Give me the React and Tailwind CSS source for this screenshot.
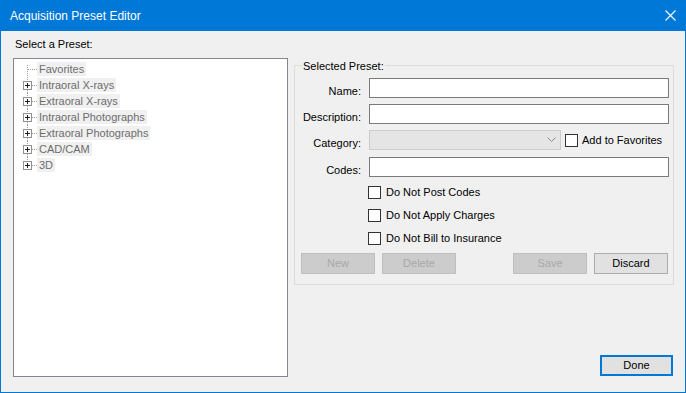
const font = "font-['Liberation_Sans',Arial,sans-serif]"

const treeItems = [
  { label: 'Favorites', folder: false },
  { label: 'Intraoral X-rays', folder: true },
  { label: 'Extraoral X-rays', folder: true },
  { label: 'Intraoral Photographs', folder: true },
  { label: 'Extraoral Photographs', folder: true },
  { label: 'CAD/CAM', folder: true },
  { label: '3D', folder: true },
]

function TreeLines({ first, last, folder }) {
  const dot = { stroke: '#a0a0a0', strokeWidth: 1, strokeDasharray: '1 1' }
  return (
    <svg width="23" height="16" className="shrink-0">
      {folder ? (
        <>
          {!first && <line x1="13.5" y1="0" x2="13.5" y2="3" {...dot} />}
          {!last && <line x1="13.5" y1="13" x2="13.5" y2="16" {...dot} />}
          <line x1="18" y1="8.5" x2="23" y2="8.5" {...dot} />
          <rect x="9.5" y="4.5" width="8" height="8" fill="#fff" stroke="#919191" />
          <line x1="11" y1="8.5" x2="16" y2="8.5" stroke="#1e1e1e" />
          <line x1="13.5" y1="6" x2="13.5" y2="11" stroke="#1e1e1e" />
        </>
      ) : (
        <>
          <line x1="13.5" y1={first ? 4 : 0} x2="13.5" y2={last ? 8 : 16} {...dot} />
          <line x1="14" y1="8.5" x2="23" y2="8.5" {...dot} />
        </>
      )}
    </svg>
  )
}

function Field({ label, children, className = '' }) {
  return (
    <div className={`flex items-end ${className}`}>
      <span className="w-[66px] text-right leading-[13px]">{label}</span>
      <div className="ml-[8px] flex items-center">{children}</div>
    </div>
  )
}

function Check({ label, className = '' }) {
  return (
    <div className={`flex items-center h-[13px] ${className}`}>
      <span className="w-[13px] h-[13px] border border-[#333333] bg-white shrink-0" />
      <span className="ml-[5px] leading-[13px]">{label}</span>
    </div>
  )
}

function Btn({ children, disabled, className = '' }) {
  return (
    <button
      type="button"
      className={`w-[74px] h-[21px] border text-[11px] leading-none flex items-center justify-center ${
        disabled
          ? 'bg-[#cccccc] border-[#bfbfbf] text-[#a8a8a8]'
          : 'bg-[#e1e1e1] border-[#adadad] text-black'
      } ${className}`}
    >
      {children}
    </button>
  )
}

export default function App() {
  return (
    <div className={`w-[686px] h-[393px] flex flex-col bg-[#f0f0f0] border-x border-b border-[#0078d7] text-[11px] text-black ${font}`}>
      <div className="h-[31px] shrink-0 bg-[#0078d7] flex items-center justify-between pl-[9px] pr-[9px] text-white text-[12px]">
        <span>Acquisition Preset Editor</span>
        <svg width="11" height="11" viewBox="0 0 11 11">
          <line x1="0.5" y1="0.5" x2="10.5" y2="10.5" stroke="#fff" strokeWidth="1.1" />
          <line x1="10.5" y1="0.5" x2="0.5" y2="10.5" stroke="#fff" strokeWidth="1.1" />
        </svg>
      </div>

      <div className="flex-1 flex pl-[12px] pb-[15px]">
        <div className="w-[275px] flex flex-col pt-[7px]">
          <span className="ml-[2px] leading-[13px]">Select a Preset:</span>
          <div className="mt-[7px] h-[319px] border border-[#828790] bg-white pt-[2px]">
            {treeItems.map((item, i) => (
              <div key={item.label} className="h-[16px] flex items-center">
                <TreeLines first={i === 0} last={i === treeItems.length - 1} folder={item.folder} />
                <span className="h-[14px] leading-[14px] px-[2px] bg-[#f0f0f0] text-[#6d6d6d]">{item.label}</span>
              </div>
            ))}
          </div>
        </div>

        <div className="ml-[6px] w-[380px] flex flex-col pt-[34px]">
          <div className="relative h-[220px] border border-[#dcdcdc] pt-[12px]">
            <span className="absolute left-[7px] -top-[6px] px-[1px] bg-[#f0f0f0] leading-[13px]">Selected Preset:</span>

            <Field label="Name:">
              <div className="w-[300px] h-[20px] border border-[#7a7a7a] bg-white" />
            </Field>
            <Field label="Description:" className="mt-[6px]">
              <div className="w-[300px] h-[20px] border border-[#7a7a7a] bg-white" />
            </Field>
            <Field label="Category:" className="mt-[6px]">
              <div className="w-[192px] h-[20px] border border-[#cccccc] bg-[#e5e5e5] flex items-center justify-end pr-[4px]">
                <svg width="9" height="6" viewBox="0 0 9 6">
                  <polyline points="0.5,0.5 4.5,4.5 8.5,0.5" fill="none" stroke="#8a8a8a" strokeWidth="1" />
                </svg>
              </div>
              <span className="ml-[4px] w-[13px] h-[13px] border border-[#333333] bg-white" />
              <span className="ml-[4px] leading-[13px]">Add to Favorites</span>
            </Field>
            <Field label="Codes:" className="mt-[7px]">
              <div className="w-[300px] h-[20px] border border-[#7a7a7a] bg-white" />
            </Field>

            <div className="ml-[73px] mt-[9px]">
              <Check label="Do Not Post Codes" />
              <Check label="Do Not Apply Charges" className="mt-[10px]" />
              <Check label="Do Not Bill to Insurance" className="mt-[10px]" />
            </div>

            <div className="flex mt-[8px] ml-[6px]">
              <Btn disabled>New</Btn>
              <Btn disabled className="ml-[7px]">Delete</Btn>
              <Btn disabled className="ml-[57px]">Save</Btn>
              <Btn className="ml-[7px]">Discard</Btn>
            </div>
          </div>

          <div className="flex-1" />
          <button
            type="button"
            className="self-end mr-[1px] mb-[1px] w-[73px] h-[21px] border-2 border-[#0078d7] bg-[#e1e1e1] flex items-center justify-center leading-none"
          >
            Done
          </button>
        </div>
      </div>
    </div>
  )
}
